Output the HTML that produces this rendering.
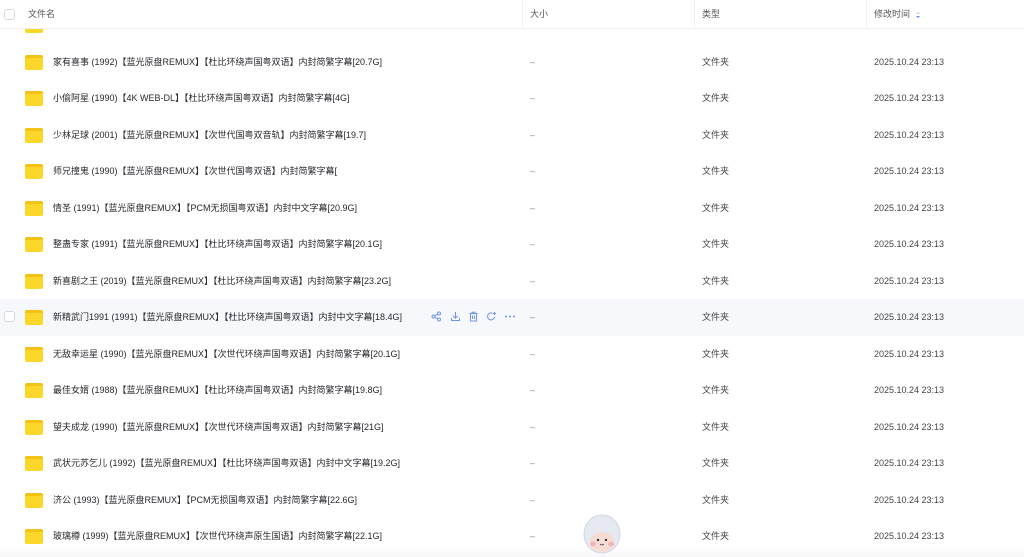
<!DOCTYPE html><html><head><meta charset="utf-8"><style>
*{margin:0;padding:0;box-sizing:border-box}
body{width:1024px;height:557px;overflow:hidden;background:#fff;font-family:"Liberation Sans","Noto Sans CJK SC",sans-serif;position:relative;color:#25262b}
.hdr{position:absolute;left:0;top:0;width:1024px;height:29px;border-bottom:1px solid #eef0f3;background:#fff;z-index:5;font-size:9px;color:#555;line-height:12px}
.hdr span{position:absolute;top:8px}
.sep{position:absolute;top:0;width:1px;height:29px;background:#eef0f3}
.cb{position:absolute;left:4px;width:11px;height:11px;border:1px solid #d5d8de;border-radius:3px;background:#fff}
.row{position:absolute;left:0;width:1024px;height:36.5px;font-size:9px;line-height:12px}
.row span{height:12px;display:block}
.f{position:absolute;left:25px;top:11px;width:18px;height:15px;border-radius:2px;background:#fcd72b;border-top:3px solid #f3c213}
.n{position:absolute;left:53px;top:12px;white-space:nowrap;color:#26282d}
.s{position:absolute;left:530px;top:12px;color:#888}
.t{position:absolute;left:702px;top:12px;color:#444}
.d{position:absolute;left:874px;top:12px;color:#444}
.hov{background:#f7f8fb}
.ic{position:absolute;top:12px}
</style></head><body>
<div class="hdr"><div class="cb" style="top:9px"></div><span style="left:28px">文件名</span><div class="sep" style="left:522px"></div><span style="left:530px">大小</span><div class="sep" style="left:694px"></div><span style="left:702px">类型</span><div class="sep" style="left:866px"></div><span style="left:874px">修改时间</span>
<svg style="position:absolute;left:915px;top:10px" width="6" height="10" viewBox="0 0 6 10"><path d="M1 4L3 2L5 4Z" fill="#c8cdd6"/><path d="M1 6L3 8L5 6Z" fill="#5b8cf6"/></svg></div>

<div class="row" style="top:7.25px"><div class="f"></div></div>
<div class="row" style="top:43.75px"><div class="f"></div><span class="n">家有喜事 (1992)【蓝光原盘REMUX】【杜比环绕声国粤双语】内封简繁字幕[20.7G]</span><span class="s">–</span><span class="t">文件夹</span><span class="d">2025.10.24 23:13</span></div>
<div class="row" style="top:80.25px"><div class="f"></div><span class="n">小偷阿星 (1990)【4K WEB-DL】【杜比环绕声国粤双语】内封简繁字幕[4G]</span><span class="s">–</span><span class="t">文件夹</span><span class="d">2025.10.24 23:13</span></div>
<div class="row" style="top:116.75px"><div class="f"></div><span class="n">少林足球 (2001)【蓝光原盘REMUX】【次世代国粤双音轨】内封简繁字幕[19.7]</span><span class="s">–</span><span class="t">文件夹</span><span class="d">2025.10.24 23:13</span></div>
<div class="row" style="top:153.25px"><div class="f"></div><span class="n">师兄撞鬼 (1990)【蓝光原盘REMUX】【次世代国粤双语】内封简繁字幕[</span><span class="s">–</span><span class="t">文件夹</span><span class="d">2025.10.24 23:13</span></div>
<div class="row" style="top:189.75px"><div class="f"></div><span class="n">情圣 (1991)【蓝光原盘REMUX】【PCM无损国粤双语】内封中文字幕[20.9G]</span><span class="s">–</span><span class="t">文件夹</span><span class="d">2025.10.24 23:13</span></div>
<div class="row" style="top:226.25px"><div class="f"></div><span class="n">整蛊专家 (1991)【蓝光原盘REMUX】【杜比环绕声国粤双语】内封简繁字幕[20.1G]</span><span class="s">–</span><span class="t">文件夹</span><span class="d">2025.10.24 23:13</span></div>
<div class="row" style="top:262.75px"><div class="f"></div><span class="n">新喜剧之王 (2019)【蓝光原盘REMUX】【杜比环绕声国粤双语】内封简繁字幕[23.2G]</span><span class="s">–</span><span class="t">文件夹</span><span class="d">2025.10.24 23:13</span></div>
<div class="row hov" style="top:299.25px"><div class="cb" style="top:12px"></div><div class="f"></div><span class="n">新精武门1991 (1991)【蓝光原盘REMUX】【杜比环绕声国粤双语】内封中文字幕[18.4G]</span><span class="s">–</span><span class="t">文件夹</span><span class="d">2025.10.24 23:13</span>
<svg class="ic" style="left:431px" width="11" height="11" viewBox="0 0 11 11" fill="none" stroke="#6f95f2" stroke-width="1"><circle cx="8" cy="2.5" r="1.5"/><circle cx="2.5" cy="5.5" r="1.5"/><circle cx="8" cy="8.5" r="1.5"/><path d="M4 4.7L6.6 3.2M4 6.3L6.6 7.8"/></svg>
<svg class="ic" style="left:450px" width="11" height="11" viewBox="0 0 11 11" fill="none" stroke="#6f95f2"><path d="M5.5 1V7M3 4.8L5.5 7.2L8 4.8M1.5 7V9.5H9.5V7"/></svg>
<svg class="ic" style="left:468px" width="11" height="11" viewBox="0 0 11 11" fill="none" stroke="#6f95f2"><path d="M1.5 2.5H9.5M4 2.5V1.2H7V2.5M2.5 2.5V10H8.5V2.5M4.5 4.5V8M6.5 4.5V8"/></svg>
<svg class="ic" style="left:486px" width="11" height="11" viewBox="0 0 11 11" fill="none" stroke="#6f95f2"><path d="M8.5 6A3.5 3.5 0 1 1 6.5 2.2"/><path d="M8.5 1V4M7 2.5H10"/></svg>
<svg class="ic" style="left:504px" width="12" height="11" viewBox="0 0 12 11" fill="#6f95f2"><circle cx="2" cy="5.5" r="1"/><circle cx="6" cy="5.5" r="1"/><circle cx="10" cy="5.5" r="1"/></svg></div>
<div class="row" style="top:335.75px"><div class="f"></div><span class="n">无敌幸运星 (1990)【蓝光原盘REMUX】【次世代环绕声国粤双语】内封简繁字幕[20.1G]</span><span class="s">–</span><span class="t">文件夹</span><span class="d">2025.10.24 23:13</span></div>
<div class="row" style="top:372.25px"><div class="f"></div><span class="n">最佳女婿 (1988)【蓝光原盘REMUX】【杜比环绕声国粤双语】内封简繁字幕[19.8G]</span><span class="s">–</span><span class="t">文件夹</span><span class="d">2025.10.24 23:13</span></div>
<div class="row" style="top:408.75px"><div class="f"></div><span class="n">望夫成龙 (1990)【蓝光原盘REMUX】【次世代环绕声国粤双语】内封简繁字幕[21G]</span><span class="s">–</span><span class="t">文件夹</span><span class="d">2025.10.24 23:13</span></div>
<div class="row" style="top:445.25px"><div class="f"></div><span class="n">武状元苏乞儿 (1992)【蓝光原盘REMUX】【杜比环绕声国粤双语】内封中文字幕[19.2G]</span><span class="s">–</span><span class="t">文件夹</span><span class="d">2025.10.24 23:13</span></div>
<div class="row" style="top:481.75px"><div class="f"></div><span class="n">济公 (1993)【蓝光原盘REMUX】【PCM无损国粤双语】内封简繁字幕[22.6G]</span><span class="s">–</span><span class="t">文件夹</span><span class="d">2025.10.24 23:13</span></div>
<div class="row" style="top:518.25px"><div class="f"></div><span class="n">玻璃樽 (1999)【蓝光原盘REMUX】【次世代环绕声原生国语】内封简繁字幕[22.1G]</span><span class="s">–</span><span class="t">文件夹</span><span class="d">2025.10.24 23:13</span></div>

<div style="position:absolute;left:0;top:545px;width:1024px;height:12px;background:linear-gradient(rgba(255,255,255,0),rgba(242,242,244,0.6))"></div>
<svg style="position:absolute;left:582px;top:513px" width="40" height="44" viewBox="0 0 40 44"><ellipse cx="20" cy="21" rx="18" ry="19" fill="#e6e8f2" stroke="#d3d6e3"/><ellipse cx="20" cy="29" rx="12" ry="10" fill="#f7dcd6"/><ellipse cx="11" cy="31" rx="3" ry="2.5" fill="#f2b7b4"/><ellipse cx="29" cy="31" rx="3" ry="2.5" fill="#f2b7b4"/><circle cx="16" cy="27" r="1.2" fill="#333"/><circle cx="24" cy="27" r="1.2" fill="#333"/><path d="M18 31Q20 33 22 31" stroke="#333" fill="none" stroke-width=".8"/></svg>
</body></html>
